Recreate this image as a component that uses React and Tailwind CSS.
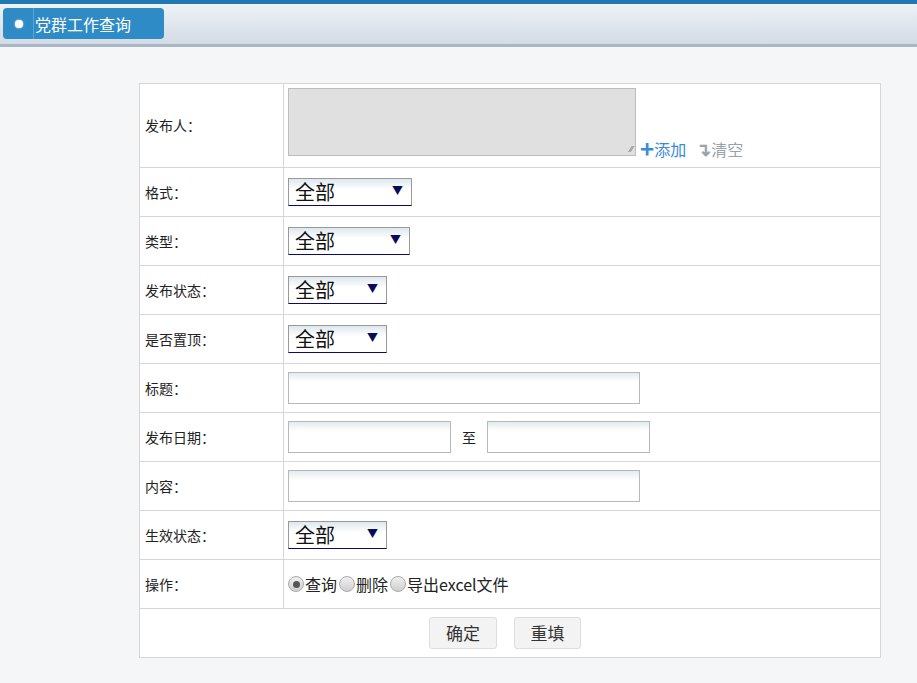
import React from 'react';

const font = { fontFamily: '"Microsoft YaHei", "Noto Sans CJK SC", sans-serif' };

const Select = ({ w }) => (
  <div className={`${w} h-[28px] border border-[#999] border-b-[#0a0a6a] bg-gradient-to-b from-[#dde8ee] to-white to-40% flex items-end justify-between pl-[6px] pr-[8px]`}>
    <span className="text-[20px] leading-[26px] text-[#111]">全部</span>
    <span className="text-[11px] text-[#0a0a5a] self-center mb-[4px]">▼</span>
  </div>
);

const Input = ({ w }) => (
  <div className={`${w} h-[32px] border border-[#b8b8b8] bg-gradient-to-b from-[#e4eaed] to-white to-30%`} />
);

const Row = ({ label, children, h = 'h-[49px]' }) => (
  <div className={`flex ${h} border-t border-[#d6d6d6]`}>
    <div className="w-[144px] shrink-0 border-r border-[#d6d6d6] flex items-center pl-[5px]">{label}</div>
    <div className="flex-1 flex items-center pl-[4px]">{children}</div>
  </div>
);

const Radio = ({ checked, label }) => (
  <span className="flex items-center">
    <span className="w-[16px] h-[16px] rounded-full border border-[#aaa] bg-gradient-to-b from-[#f0f0f0] to-[#cfcfcf] flex items-center justify-center">
      {checked && <span className="w-[7px] h-[7px] rounded-full bg-[#555]" />}
    </span>
    <span className="ml-[1px] mr-[2px]">{label}</span>
  </span>
);

export default function App() {
  return (
    <div className="w-[917px] h-[683px] bg-[#f5f6f8] text-[14px] text-[#222]" style={font}>
      <div className="h-[4px] bg-[#1f79b0]" />
      <div className="h-[40px] bg-gradient-to-b from-[#eef2f7] to-[#d3dbe5] flex items-start pt-[4px] pl-[3px]">
        <div className="w-[161px] h-[31px] rounded-[4px] bg-[#2e8bc6] flex items-center">
          <span className="w-[8px] h-[8px] rounded-full bg-white ml-[12px] shadow-[0_0_2px_#fff]" />
          <span className="w-px h-full bg-[#5aa6d6] ml-[10px]" />
          <span className="text-white text-[16px] ml-[1px]">党群工作查询</span>
        </div>
      </div>
      <div className="h-[3px] bg-[#a8b6c6]" />
      <div className="pt-[36px] pl-[139px]">
        <div className="w-[742px] border border-[#d6d6d6] border-t-0 bg-white">
          <Row label="发布人：" h="h-[84px]">
            <div className="flex items-end self-start mt-[4px]">
              <div className="relative w-[348px] h-[68px] border border-[#bdbdbd] bg-[#e0e0e0]">
                <span className="absolute right-[2px] bottom-[2px] text-[9px] leading-[9px] text-[#666]">⁄⁄</span>
              </div>
              <span className="text-[#3a8bd6] ml-[4px] flex items-end mb-[-5px]">
                <span className="text-[24px] font-bold leading-[22px] mb-[2px]">+</span>
                <span className="text-[16px]">添加</span>
              </span>
              <span className="text-[#9aa3ad] ml-[10px] flex items-end mb-[-5px]">
                <span className="text-[18px] font-bold leading-[20px] mb-[3px]">↴</span>
                <span className="text-[16px]">清空</span>
              </span>
            </div>
          </Row>
          <Row label="格式："><Select w="w-[124px]" /></Row>
          <Row label="类型："><Select w="w-[122px]" /></Row>
          <Row label="发布状态："><Select w="w-[99px]" /></Row>
          <Row label="是否置顶："><Select w="w-[99px]" /></Row>
          <Row label="标题："><Input w="w-[352px]" /></Row>
          <Row label="发布日期：">
            <Input w="w-[163px]" />
            <span className="mx-[11px]">至</span>
            <Input w="w-[163px]" />
          </Row>
          <Row label="内容："><Input w="w-[352px]" /></Row>
          <Row label="生效状态："><Select w="w-[99px]" /></Row>
          <Row label="操作：">
            <div className="flex items-center text-[16px]">
              <Radio checked label="查询" />
              <Radio label="删除" />
              <Radio label="导出excel文件" />
            </div>
          </Row>
          <div className="h-[49px] border-t border-[#d6d6d6] flex items-center justify-center gap-[17px] pr-[10px]">
            <button className="w-[68px] h-[32px] rounded-[3px] border border-[#ddd] bg-[#f3f3f3] text-[17px] text-[#333]">确定</button>
            <button className="w-[67px] h-[32px] rounded-[3px] border border-[#ddd] bg-[#f3f3f3] text-[17px] text-[#333]">重填</button>
          </div>
        </div>
      </div>
    </div>
  );
}
